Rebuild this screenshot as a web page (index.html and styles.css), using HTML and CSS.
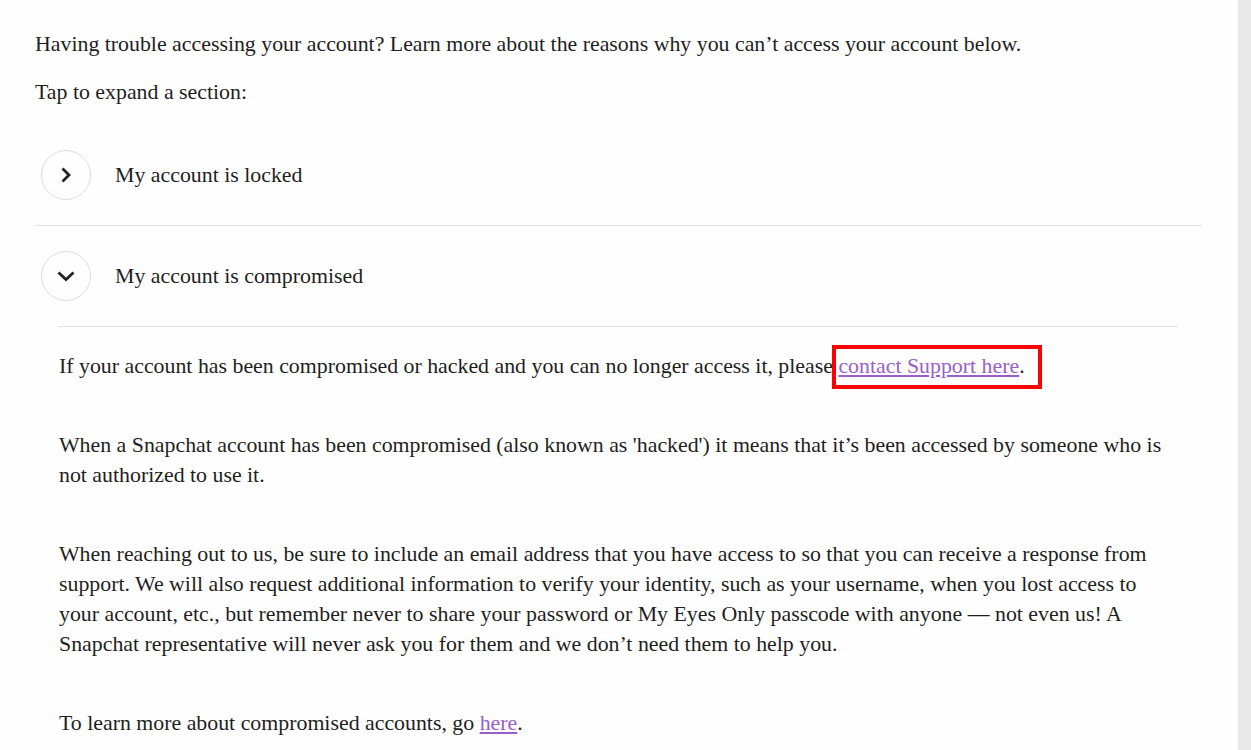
FILE: index.html
```html
<!DOCTYPE html>
<html lang="en-us">
  <head>
    <meta charset="utf-8">
    <title>Can't access my account</title>
    <link rel="stylesheet" href="styles.css">
  </head>
  <body>
    <div class="page">
      <div class="content">
        <p class="intro">Having trouble accessing your account? Learn more about the reasons why you can’t access your account below.</p>
        <p class="intro">Tap to expand a section:</p>

        <div class="section">
          <div class="section-head">
            <span class="toggle">
              <svg width="20" height="20" viewBox="0 0 20 20"><path d="M6.5 3.5 L13 10 L6.5 16.5" fill="none" stroke="#222" stroke-width="2.8"/></svg>
            </span>
            <span class="section-title">My account is locked</span>
          </div>
        </div>

        <div class="section open">
          <div class="section-head">
            <span class="toggle">
              <svg width="20" height="20" viewBox="0 0 20 20"><path d="M2.5 6.5 L10 13.5 L17.5 6.5" fill="none" stroke="#222" stroke-width="2.8"/></svg>
            </span>
            <span class="section-title">My account is compromised</span>
          </div>
          <div class="section-body">
            <p>If your account has been compromised or hacked and you can no longer access it, please <a href="#" class="marked">contact Support here</a>.</p>
            <p>When a Snapchat account has been compromised (also known as 'hacked') it means that it’s been accessed by someone who is not authorized to use it.</p>
            <p>When reaching out to us, be sure to include an email address that you have access to so that you can receive a response from support. We will also request additional information to verify your identity, such as your username, when you lost access to your account, etc., but remember never to share your password or My Eyes Only passcode with anyone — not even us! A Snapchat representative will never ask you for them and we don’t need them to help you.</p>
            <p>To learn more about compromised accounts, go <a href="#">here</a>.</p>
          </div>
        </div>
      </div>
      <div class="scroll-strip"></div>
    </div>
  </body>
</html>
```

FILE: styles.css
```css
html {
  font-family: "Liberation Serif", "Times New Roman", serif;
}

body {
  margin: 0;
  background-color: #fff;
  color: #1e1e1e;
  overflow: hidden;
}

.page {
  display: flex;
  height: 750px;
}

.content {
  flex: 1;
  padding: 29px 36px 0 35px;
  background-color: #fefefe;
}

.scroll-strip {
  width: 13px;
  background-color: #e8e8e8;
}

p {
  font-size: 21.85px;
  line-height: 30px;
  margin: 0;
}

.intro {
  margin-bottom: 18px;
}

.section {
  border-bottom: 1px solid #e2e2e2;
}

.section.open {
  border-bottom: none;
}

.section-head {
  display: flex;
  align-items: center;
  height: 100px;
  padding-left: 6px;
}

.toggle {
  display: flex;
  align-items: center;
  justify-content: center;
  width: 48px;
  height: 48px;
  border: 1px solid #dcdcdc;
  border-radius: 50%;
  margin-right: 24px;
}

.section-title {
  font-size: 21.85px;
}

.section-body {
  margin: 0 24px 0 23px;
  border-top: 1px solid #e2e2e2;
  padding: 24px 1px 0 1px;
}

.section-body p {
  margin-bottom: 49px;
}

a {
  color: #9a5fc9;
}

.marked {
  position: relative;
}

.marked::after {
  content: "";
  position: absolute;
  left: -6px;
  right: -23px;
  top: -9px;
  bottom: -11px;
  border: 4px solid #f00;
}
```
